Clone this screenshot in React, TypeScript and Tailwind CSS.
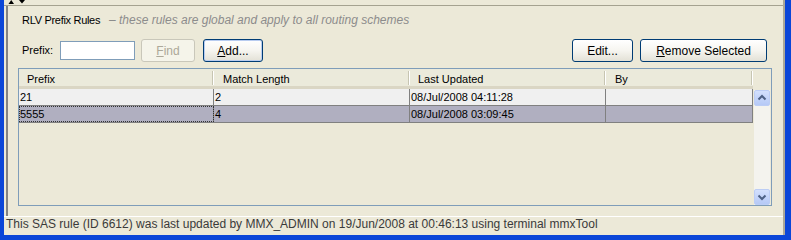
const sans = "font-['Liberation_Sans',Arial,sans-serif]";

const columns = [
  { title: "Prefix", width: "w-[195px]", pad: "pl-[8px]" },
  { title: "Match Length", width: "w-[196px]", pad: "pl-[9px]" },
  { title: "Last Updated", width: "w-[196px]", pad: "pl-[8px]" },
  { title: "By", width: "w-[147px]", pad: "pl-[9px]" },
];

const rows = [
  { cells: ["21", "2", "08/Jul/2008 04:11:28", ""], selected: false },
  { cells: ["5555", "4", "08/Jul/2008 03:09:45", ""], selected: true },
];

function XpButton({
  children,
  className = "",
  disabled = false,
  focused = false,
}: {
  children: React.ReactNode;
  className?: string;
  disabled?: boolean;
  focused?: boolean;
}) {
  const look = disabled
    ? "border-[#C9C7BA] bg-[#F5F4EA] text-[#ACA899]"
    : "border-[#003C74] bg-linear-to-b from-white via-[#F6F5F0] to-[#E3E1D6] text-black";
  return (
    <div
      className={`h-[23px] shrink-0 flex items-center justify-center rounded-[3px] border text-[12px] leading-[14px] ${sans} ${look} ${
        focused ? "shadow-[inset_0_0_0_1px_#B8CCF0]" : ""
      } ${className}`}
    >
      {children}
    </div>
  );
}

function ScrollButton({ up }: { up?: boolean }) {
  return (
    <div className="w-[16px] h-[16px] shrink-0 rounded-[2px] border border-[#BCCDF5] bg-linear-to-b from-[#D3E0FD] to-[#B6C9F6] flex items-center justify-center">
      <svg width="14" height="14" viewBox="0 0 14 14">
        <polyline
          points={up ? "3.5,8.5 7,5 10.5,8.5" : "3.5,5.5 7,9 10.5,5.5"}
          fill="none"
          stroke="#4D6185"
          strokeWidth="2"
        />
      </svg>
    </div>
  );
}

function RulesTable() {
  return (
    <div className="ml-[10px] w-[754px] h-[138px] shrink-0 border border-[#7F9DB9] flex flex-col">
      <div className="flex h-[20px] shrink-0">
        {columns.map((c) => (
          <div
            key={c.title}
            className={`${c.width} h-full flex justify-between bg-[#EBEADB] border-b-[3px] border-[#DAD6C4]`}
          >
            <span className={`${c.pad} pt-[4px] text-[11px] leading-[13px] text-black ${sans}`}>{c.title}</span>
            <div className="flex mt-[2px] h-[14px]">
              <div className="w-px bg-[#C7C5B2]" />
              <div className="w-px bg-white" />
            </div>
          </div>
        ))}
      </div>
      <div className="flex flex-1">
        <div className="w-[734px] flex flex-col">
          {rows.map((r) => (
            <div
              key={r.cells[0]}
              className={`flex h-[17px] border-b border-[#808080] ${r.selected ? "bg-[#B0AFC0]" : "bg-[#F0F0F0]"}`}
            >
              {r.cells.map((cell, i) => (
                <div
                  key={i}
                  className={`${columns[i].width} h-full pl-[1px] border-r border-[#808080] text-[11px] leading-[16px] text-black ${sans} ${
                    r.selected && i === 0 ? "outline-1 outline-dotted -outline-offset-1 outline-[#333]" : ""
                  }`}
                >
                  {cell}
                </div>
              ))}
            </div>
          ))}
        </div>
        <div className="w-[18px] pl-[1px] pt-[1px] flex">
          <div className="w-[16px] flex flex-col bg-[#F4F3EE]">
            <ScrollButton up />
            <div className="flex-1" />
            <ScrollButton />
          </div>
        </div>
      </div>
    </div>
  );
}

export default function App() {
  return (
    <div className="w-[791px] h-[240px] overflow-hidden bg-[#0B46D8] pl-[4px] pr-[6px] pb-[5px]">
      <div className="h-full flex flex-col bg-[#ECE9D8] border-r-2 border-[#ACA899]">
        <div className="h-[6px] shrink-0 border-b border-[#A5A290]">
          <svg width="24" height="5" viewBox="0 0 24 5" className="block">
            <polygon points="4.5,4 10,4 7.25,0" fill="#000" />
            <polygon points="15,0 21,0 18,3.5" fill="#000" />
          </svg>
        </div>

        <div className="flex-1 ml-[2px] border-l-2 border-[#838383] flex flex-col">
          <div className={`pt-[8px] pl-[14px] flex items-baseline ${sans}`}>
            <span className="w-[87px] text-[11px] leading-[13px] tracking-[-0.3px] text-black">RLV Prefix Rules</span>
            <span className="text-[12px] leading-[13px] italic text-[#8C8C8C]">
              – these rules are global and apply to all routing schemes
            </span>
          </div>

          <div className="mt-[12px] pl-[14px] pr-[16px] flex items-center">
            <span className={`w-[38px] text-[11px] leading-[13px] text-black ${sans}`}>Prefix:</span>
            <div className="w-[75px] h-[19px] border border-[#7F9DB9] bg-white" />
            <XpButton disabled className="ml-[6px] w-[54px]">
              <span className="underline">F</span>ind
            </XpButton>
            <XpButton focused className="ml-[8px] w-[60px]">
              <span className="underline">A</span>dd...
            </XpButton>
            <XpButton className="ml-auto w-[61px]">Edit...</XpButton>
            <XpButton className="ml-[7px] w-[127px]">
              <span className="underline">R</span>emove Selected
            </XpButton>
          </div>

          <div className="mt-[6px]">
            <RulesTable />
          </div>
        </div>

        <div className={`h-[19px] shrink-0 border-t border-white pl-[2px] text-[12px] leading-[15px] text-[#3A3A3A] ${sans}`}>
          This SAS rule (ID 6612) was last updated by MMX_ADMIN on 19/Jun/2008 at 00:46:13 using terminal mmxTool
        </div>
      </div>
    </div>
  );
}
